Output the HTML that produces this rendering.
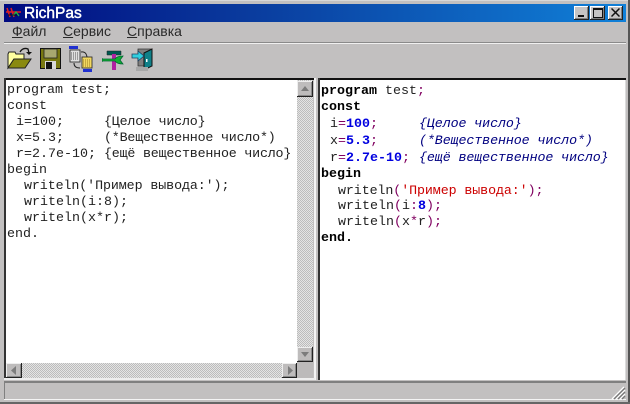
<!DOCTYPE html>
<html><head><meta charset="utf-8"><style>
html,body{margin:0;padding:0;background:#c0bebe;}
#w{position:relative;width:630px;height:404px;overflow:hidden;background:#c2c0c0;font-family:"Liberation Sans","Noto Sans CJK SC",sans-serif;}
.a{position:absolute;}
#tb{left:4px;top:4px;width:622px;height:18px;background:linear-gradient(90deg,#000a80 0%,#0a3c9e 40%,#1080d8 100%);}
#tt{left:24px;top:5px;color:#fff;font-size:15.5px;line-height:18px;-webkit-text-stroke:.45px #fff;}
.m{top:22px;font-size:14px;line-height:19px;color:#2a2a2a;white-space:pre;}
.m u{text-decoration:underline;text-underline-offset:1px;}
.wb{top:6px;width:15px;height:14px;background:#c6c4c4;box-shadow:inset -1px -1px 0 #222,inset 1px 1px 0 #fff,inset -2px -2px 0 #808080;}
.l{position:absolute;white-space:pre;font-family:"Liberation Mono","Noto Sans CJK SC",monospace;font-size:13.33px;line-height:16px;color:#222;}
.t{letter-spacing:-.2px;}
.u{letter-spacing:-.1px;}
.hatch{background-color:#e4e4e4;background-image:linear-gradient(45deg,#bcbcbc 25%,transparent 25%,transparent 75%,#bcbcbc 75%),linear-gradient(45deg,#bcbcbc 25%,transparent 25%,transparent 75%,#bcbcbc 75%);background-size:2px 2px;background-position:0 0,1px 1px;}
.sb{background:#bebcbc;box-shadow:inset -1px -1px 0 #222,inset 1px 1px 0 #eee,inset -2px -2px 0 #8a8a8a;}
b.k{font-weight:bold;color:#000;}
b.n{font-weight:bold;color:#0000e0;}
i.c{color:#000080;}
.s{color:#cc0000;}
.p{color:#800060;}
</style></head><body><div id="w">
<div class="a" style="left:0;top:0;width:630px;height:1px;background:#d8d8d8"></div>
<div class="a" style="left:628px;top:0;width:2px;height:404px;background:#555"></div>
<div class="a" style="left:0;top:402px;width:630px;height:2px;background:#666"></div>
<div class="a" id="tb"></div>
<svg class="a" style="left:5px;top:5px" width="18" height="16" viewBox="0 0 18 16"><path d="M2 3l3 9M6 3l3 9M1 7h15" stroke="#e02020" stroke-width="1.500" fill="none"/><path d="M8 11l3-4 3 4" stroke="#20c040" stroke-width="1.200" fill="none"/><path d="M3 10h9" stroke="#101010" stroke-width="1"/></svg>
<div class="a" id="tt">RichPas</div>
<div class="a wb" style="left:574px"><div class="a" style="left:4px;top:9px;width:6px;height:2px;background:#111"></div></div>
<div class="a wb" style="left:590px"><div class="a" style="left:3px;top:2px;width:8px;height:7px;border:1px solid #111;border-top-width:2px"></div></div>
<div class="a wb" style="left:608px"><svg class="a" style="left:3px;top:2px" width="9" height="9"><path d="M.5 .5l8 8M8.500 .5l-8 8" stroke="#111" stroke-width="1.500"/></svg></div>

<div class="a m" style="left:12px"><u>Ф</u>айл</div>
<div class="a m" style="left:63px"><u>С</u>ервис</div>
<div class="a m" style="left:127px"><u>С</u>правка</div>
<div class="a" style="left:4px;top:42px;width:622px;height:1px;background:#8a8a8a"></div>
<div class="a" style="left:4px;top:43px;width:622px;height:1px;background:#f0f0f0"></div>

<svg class="a" style="left:6px;top:46px" width="27" height="25" viewBox="0 0 27 25">
<path d="M2 8l1-2h6l1 2h8v5H8L2 22z" fill="#ffffa0" stroke="#222" stroke-width="1"/>
<path d="M8 13h17l-6 9H2z" fill="#8a8a10" stroke="#222" stroke-width="1"/>
<path d="M14 6q3-5 8-3l1 4" fill="none" stroke="#111" stroke-width="1.300"/><path d="M20 6h6l-3 3z" fill="#111"/>
</svg>
<svg class="a" style="left:40px;top:48px" width="21" height="22" viewBox="0 0 21 22">
<rect x=".5" y=".5" width="20" height="20" fill="#787810" stroke="#111"/>
<rect x="4" y="1" width="13" height="9" fill="#a8a870" stroke="#222" stroke-width=".8"/>
<rect x="5" y="13" width="11" height="8" fill="#d8d8d8"/><rect x="6" y="14" width="6" height="7" fill="#111"/>
</svg>
<svg class="a" style="left:68px;top:46px" width="26" height="27" viewBox="0 0 26 27">
<rect x="1" y="0" width="9" height="3" fill="#2030d0"/>
<rect x="2" y="4" width="10" height="12" fill="#e0e0e0" stroke="#222" stroke-width=".8"/>
<path d="M3 7h8M3 9h8M3 11h8M3 13h8" stroke="#555" stroke-dasharray="1 1"/>
<path d="M13 6q5-1 6 5M6 17q0 5 6 5" fill="none" stroke="#222"/>
<rect x="14" y="11" width="10" height="11" fill="#f2d860" stroke="#222" stroke-width=".8"/>
<path d="M15 14h8M15 16h8M15 18h8M15 20h8" stroke="#9a7a20" stroke-dasharray="1 1"/>
<rect x="15" y="23" width="9" height="3" fill="#2030d0"/>
</svg>
<svg class="a" style="left:102px;top:50px" width="22" height="21" viewBox="0 0 22 21">
<path d="M5 1h14v4H5z" fill="#005850" stroke="#222" stroke-width=".5"/>
<rect x="10" y="4" width="4" height="16" fill="#b020a0"/>
<path d="M1 9h12q2-3 8-3l-3 4 3 4q-6 0-8-3H1q-1 1-1-1t1-1z" fill="#10b030" stroke="#063" stroke-width=".8"/>
</svg>
<svg class="a" style="left:131px;top:47px" width="24" height="25" viewBox="0 0 24 25">
<path d="M7 2h14v17H7z" fill="#808080" stroke="#333" stroke-width=".8"/>
<path d="M13 6l8-4v17l-8 4z" fill="#108088" stroke="#111" stroke-width="1"/>
<rect x="15" y="12" width="1.500" height="3" fill="#fff"/>
<path d="M1 7h6V4l6 5-6 5v-3H1z" fill="#30d0e0" stroke="#204060" stroke-width=".8"/>
<rect x="5" y="20" width="12" height="4" fill="#a8a8a8"/>
</svg>

<div class="a" style="left:5px;top:79px;width:292px;height:284px;background:#fff"></div>
<div class="a" style="left:4px;top:78px;width:311px;height:2px;background:#111"></div>
<div class="a" style="left:4px;top:78px;width:2px;height:301px;background:#333"></div>
<div class="a hatch" style="left:297px;top:80px;width:16px;height:282px"></div>
<div class="a sb" style="left:297px;top:81px;width:16px;height:16px"><svg class="a" style="left:3px;top:4px" width="10" height="7"><path d="M5 1l4 5H1z" fill="#7c7c7c"/></svg></div>
<div class="a sb" style="left:297px;top:347px;width:16px;height:15px"><svg class="a" style="left:3px;top:4px" width="10" height="7"><path d="M1 1h8L5 6z" fill="#7c7c7c"/></svg></div>
<div class="a hatch" style="left:6px;top:363px;width:291px;height:15px"></div>
<div class="a sb" style="left:6px;top:363px;width:16px;height:15px"><svg class="a" style="left:4px;top:3px" width="7" height="9"><path d="M6 0v9L1 4.500z" fill="#7c7c7c"/></svg></div>
<div class="a sb" style="left:282px;top:363px;width:15px;height:15px"><svg class="a" style="left:5px;top:3px" width="7" height="9"><path d="M1 0v9l5-4.500z" fill="#7c7c7c"/></svg></div>
<div class="a" style="left:297px;top:362px;width:16px;height:16px;background:#bcbaba"></div>
<div class="a" style="left:314px;top:78px;width:1.500px;height:302px;background:#f4f4f4"></div>
<div class="a" style="left:4px;top:378px;width:311px;height:1.500px;background:#eee"></div>

<div class="l" style="left:7px;top:83px">program test;</div>
<div class="l" style="left:7px;top:99px">const</div>
<div class="l" style="left:16px;top:115px">i=100;</div>
<div class="l t" style="left:104px;top:115px">{Целое число}</div>
<div class="l" style="left:16px;top:131px">x=5.3;</div>
<div class="l t" style="left:104px;top:131px">(*Вещественное число*)</div>
<div class="l" style="left:16px;top:147px">r=2.7e-10;</div>
<div class="l t" style="left:104px;top:147px">{ещё вещественное число}</div>
<div class="l" style="left:7px;top:163px">begin</div>
<div class="l u" style="left:24px;top:179px">writeln('Пример вывода:');</div>
<div class="l" style="left:24px;top:195px">writeln(i:8);</div>
<div class="l" style="left:24px;top:211px">writeln(x*r);</div>
<div class="l" style="left:7px;top:227px">end.</div>

<div class="a" style="left:318px;top:78px;width:308px;height:302px;background:#fff"></div>
<div class="a" style="left:318px;top:78px;width:308px;height:2px;background:#111"></div>
<div class="a" style="left:318px;top:78px;width:2px;height:302px;background:#333"></div>
<div class="a" style="left:625px;top:80px;width:1px;height:300px;background:#dcdcdc"></div>
<div class="l" style="left:321px;top:84px"><b class="k">program</b> test<span class="p">;</span></div>
<div class="l" style="left:321px;top:100px"><b class="k">const</b></div>
<div class="l" style="left:330px;top:117px">i<span class="p">=</span><b class="n">100</b><span class="p">;</span></div>
<div class="l u" style="left:419px;top:117px"><i class="c">{Целое число}</i></div>
<div class="l" style="left:330px;top:134px">x<span class="p">=</span><b class="n">5.3</b><span class="p">;</span></div>
<div class="l u" style="left:419px;top:134px"><i class="c">(*Вещественное число*)</i></div>
<div class="l" style="left:330px;top:151px">r<span class="p">=</span><b class="n">2.7e-10</b><span class="p">;</span></div>
<div class="l u" style="left:419px;top:151px"><i class="c">{ещё вещественное число}</i></div>
<div class="l" style="left:321px;top:167px"><b class="k">begin</b></div>
<div class="l u" style="left:338px;top:184px">writeln<span class="p">(</span><span class="s">'Пример вывода:'</span><span class="p">);</span></div>
<div class="l" style="left:338px;top:199px">writeln<span class="p">(</span>i<span class="p">:</span><b class="n">8</b><span class="p">);</span></div>
<div class="l" style="left:338px;top:215px">writeln<span class="p">(</span>x<span class="p">*</span>r<span class="p">);</span></div>
<div class="l" style="left:321px;top:231px"><b class="k">end.</b></div>

<div class="a" style="left:4px;top:381px;width:622px;height:2px;background:#808080"></div>
<div class="a" style="left:4px;top:383px;width:1px;height:16px;background:#808080"></div>
<div class="a" style="left:4px;top:399px;width:622px;height:1px;background:#f4f4f4"></div>
<svg class="a" style="left:610px;top:386px" width="16" height="14" viewBox="0 0 16 14"><path d="M2 13L14 1M6 13L15 4M10 13l5-5" stroke="#fff" stroke-width="1.300"/><path d="M4 13L15 2M8 13l7-7M12 13l3-3" stroke="#777" stroke-width="1.300"/></svg>
</div></body></html>
